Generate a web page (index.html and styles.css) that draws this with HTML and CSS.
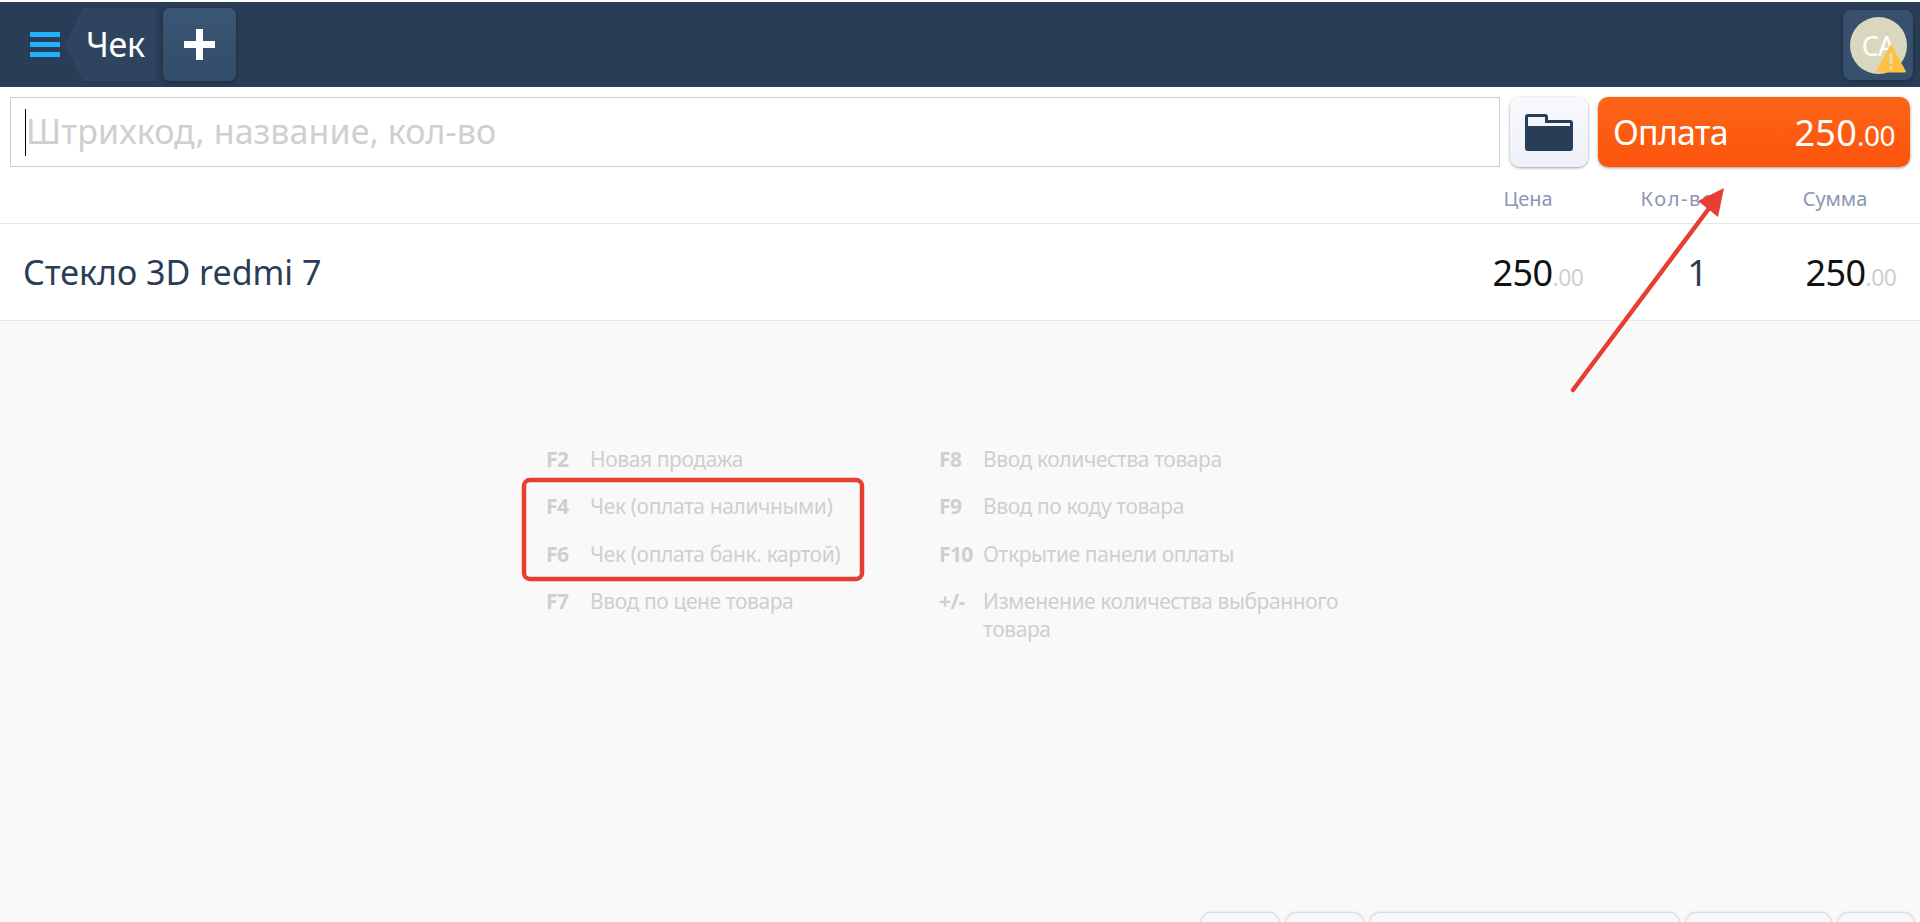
FILE: index.html
```html
<!DOCTYPE html>
<html lang="ru">
<head>
<meta charset="utf-8">
<title>Чек</title>
<link rel="stylesheet" href="styles.css">
</head>
<body>
<div class="app">
  <header class="topbar">
    <button class="burger" aria-label="Меню"><span></span><span></span><span></span></button>
    <div class="tab">Чек</div>
    <button class="add" aria-label="Добавить">
      <svg width="31" height="31" viewBox="0 0 31 31"><path d="M12 0h7v12h12v7H19v12h-7V19H0v-7h12z" fill="#fff"/></svg>
    </button>
    <div class="spacer"></div>
    <button class="user">
      <span class="avatar">CA</span>
      <svg class="warn" width="32" height="30" viewBox="0 0 32 30"><path d="M16 1 31 28.500a1 1 0 0 1-1 1H2a1 1 0 0 1-1-1z" fill="#ffc040"/><rect x="14.200" y="10" width="3.600" height="11" fill="#e8d9a0"/><rect x="14.200" y="23" width="3.600" height="3.600" fill="#e8d9a0"/></svg>
    </button>
  </header>

  <div class="searchbar">
    <div class="search"><i class="caret"></i><span class="placeholder">Штрихкод, название, кол-во</span></div>
    <button class="folder" aria-label="Каталог">
      <svg width="48" height="37" viewBox="0 0 48 37"><path d="M3 0h17a3 3 0 0 1 3 3v3h22a3 3 0 0 1 3 3v25a3 3 0 0 1-3 3H3a3 3 0 0 1-3-3V3a3 3 0 0 1 3-3z" fill="#2a3d56"/><path d="M3 3h17v6h25v3H3z" fill="#f3f6fb"/></svg>
    </button>
    <button class="pay"><span>Оплата</span><span class="pay-sum">250<small>.00</small></span></button>
  </div>

  <div class="thead">
    <span class="c-price">Цена</span>
    <span class="c-qty">Кол-во</span>
    <span class="c-sum">Сумма</span>
  </div>

  <div class="row">
    <span class="name">Стекло 3D redmi 7</span>
    <span class="num">250<small>.00</small></span>
    <span class="qty">1</span>
    <span class="num">250<small>.00</small></span>
  </div>

  <main class="body">
    <div class="help">
      <dl class="col">
        <div><dt>F2</dt><dd>Новая продажа</dd></div>
        <div><dt>F4</dt><dd>Чек (оплата наличными)</dd></div>
        <div><dt>F6</dt><dd>Чек (оплата банк. картой)</dd></div>
        <div><dt>F7</dt><dd>Ввод по цене товара</dd></div>
      </dl>
      <dl class="col">
        <div><dt>F8</dt><dd>Ввод количества товара</dd></div>
        <div><dt>F9</dt><dd>Ввод по коду товара</dd></div>
        <div><dt>F10</dt><dd>Открытие панели оплаты</dd></div>
        <div><dt>+/-</dt><dd>Изменение количества выбранного товара</dd></div>
      </dl>
    </div>
    <div class="actions">
      <button class="b1"></button><button class="b2"></button><button class="b3"></button><button class="b4"></button><button class="b5"></button>
    </div>
  </main>
</div>

<svg class="notes" width="1920" height="922" viewBox="0 0 1920 922">
  <rect x="524" y="480" width="338" height="99" rx="6" fill="none" stroke="#e63e32" stroke-width="4.500"/>
  <path d="M1573 390 1710 207" stroke="#e63e32" stroke-width="4.500" stroke-linecap="round" fill="none"/>
  <path d="M1724 188 1718 217 1698 201z" fill="#e63e32"/>
</svg>
</body>
</html>
```
FILE: styles.css
```css
* { box-sizing: border-box; }
html, body { margin: 0; height: 100%; }
body {
  background: #fff;
  font-family: "Noto Sans", "Open Sans", sans-serif;
  overflow: hidden;
  position: relative;
}
button { font: inherit; border: 0; padding: 0; cursor: pointer; }
.app { height: 922px; display: flex; flex-direction: column; padding-top: 2px; }

.topbar {
  height: 85px;
  flex: none;
  background: #2a3d56;
  display: flex;
  align-items: flex-start;
  padding: 6px 7px 0 30px;
}
.burger { width: 30px; height: 25px; margin-top: 24px; background: none; display: flex; flex-direction: column; justify-content: space-between; }
.burger span { display: block; height: 5px; background: #22b2fb; }
.tab {
  width: 91px;
  height: 73px;
  margin-left: 5px;
  padding-left: 21px;
  background: #2f455f;
  color: #fff;
  font-size: 34px;
  line-height: 72px;
  letter-spacing: -.3px;
  clip-path: polygon(18px 0, 100% 0, 100% 100%, 18px 100%, 0 50%);
}
.add {
  width: 73px;
  height: 73px;
  margin-left: 7px;
  border-radius: 7px;
  background: linear-gradient(#3b5674, #324d6a);
  box-shadow: 0 1px 4px rgba(0,0,0,.35);
  display: flex;
  align-items: center;
  justify-content: center;
}
.spacer { flex: 1; }
.user {
  width: 70px;
  height: 70px;
  margin-top: 2px;
  border-radius: 8px;
  background: #36506d;
  box-shadow: 0 1px 4px rgba(0,0,0,.3);
  position: relative;
  display: flex;
  align-items: center;
  justify-content: center;
}
.avatar {
  width: 57px;
  height: 57px;
  border-radius: 50%;
  background: #d9d8bf;
  color: #fff;
  font-size: 27px;
  line-height: 57px;
  letter-spacing: -1px;
  text-align: center;
}
.warn { position: absolute; left: 32px; top: 33px; }

.searchbar { height: 80px; flex: none; padding: 10px 10px 3px; display: flex; }
.search {
  flex: 1;
  height: 70px;
  border: 1px solid #cdcdcd;
  padding-left: 15px;
  display: flex;
  align-items: center;
  position: relative;
  background: #fff;
}
.caret { position: absolute; left: 14px; top: 11px; width: 1px; height: 47px; background: #000; }
.placeholder { color: #cfcfcf; font-size: 34px; letter-spacing: .1px; margin-top: -2px; }
.folder {
  width: 78px;
  height: 70px;
  margin-left: 10px;
  border-radius: 10px;
  background: linear-gradient(#f8f9fc, #edf1f8);
  box-shadow: 0 1px 3px rgba(0,0,0,.4);
  display: flex;
  align-items: center;
  justify-content: center;
}
.pay {
  width: 312px;
  height: 70px;
  margin-left: 10px;
  padding: 0 15px 0 15px;
  border-radius: 10px;
  background: linear-gradient(#fc6518, #fc540c);
  box-shadow: 0 1px 3px rgba(0,0,0,.4);
  color: #fff;
  font-size: 34px;
  letter-spacing: -.8px;
  display: flex;
  align-items: center;
  justify-content: space-between;
}
.pay-sum { font-size: 36px; letter-spacing: .2px; }
.pay small { font-size: 28px; letter-spacing: -.5px; }

.thead, .row { display: grid; flex: none; align-items: center; text-align: center; }
.thead {
  grid-template-columns: 1fr 168px 138px 170px;
  height: 57px;
  border-bottom: 1px solid #e6e6e6;
  color: #8a97b1;
  font-size: 20px;
}
.thead > span { letter-spacing: -.1px; padding-top: 6px; }
.thead .c-price { grid-column: 2; }
.thead .c-qty { letter-spacing: 1.600px; padding-right: 6px; }
.row {
  grid-template-columns: 1fr 148px 170px 138px;
  height: 97px;
  border-bottom: 1px solid #e6e6e6;
  padding-left: 23px;
}
.row .name { text-align: left; color: #2a3d56; font-size: 34px; }
.num { color: #111; font-size: 36px; letter-spacing: -.6px; }
.num small { color: #cfcfcf; font-size: 23px; letter-spacing: -.5px; }
.qty { color: #2a3d56; font-size: 36px; padding-left: 1px; }

.body { flex: 1; background: #f9f9f9; display: flex; flex-direction: column; overflow: hidden; }
.help { display: flex; padding: 124px 0 0 546px; flex: 1; }
.col { width: 393px; margin: 0; color: #cfcfcf; font-size: 21px; line-height: 28px; letter-spacing: -.4px; }
.col + .col { width: 410px; }
.col > div { display: flex; margin-bottom: 19.400px; }
.col dt { width: 44px; flex: none; font-weight: 700; letter-spacing: -.6px; }
.col dd { margin: 0; }
.actions { height: 9px; flex: none; display: flex; gap: 7px; padding-left: 1201px; }
.actions button {
  height: 40px;
  border-radius: 10px;
  background: #f7f8fb;
  box-shadow: 0 0 3px rgba(0,0,0,.35);
}
.b1 { width: 78px; } .b2 { width: 77px; } .b3 { width: 309px; } .b4 { width: 145px; } .b5 { width: 76px; }

.notes { position: absolute; left: 0; top: 0; pointer-events: none; }
```
